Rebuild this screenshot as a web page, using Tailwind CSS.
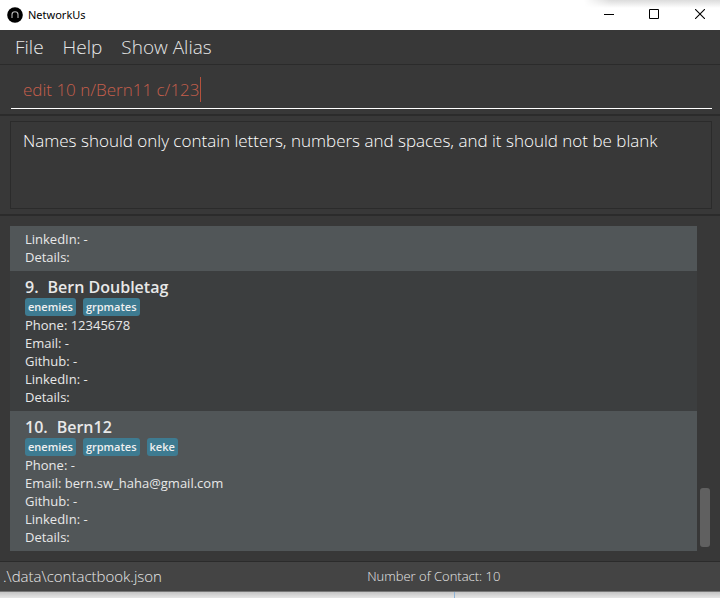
<!DOCTYPE html>
<html lang="en">
<head>
<meta charset="utf-8">
<title>NetworkUs</title>
<script src="https://cdn.jsdelivr.net/npm/@tailwindcss/browser@4"></script>
</head>
<body class="flex h-screen flex-col overflow-hidden bg-[#383838] font-['Open_Sans',sans-serif] text-[#e8e8e8]">
  <header class="relative flex h-[30px] shrink-0 items-center bg-white text-black">
    <div class="absolute top-0 right-0 h-2 w-[136px] bg-linear-to-b from-[#dcdcdc] to-white mask-l-from-80%"></div>
    <svg class="relative ml-[7px] size-4" viewBox="0 0 16 16" aria-hidden="true">
      <circle cx="8" cy="8" r="7.8" fill="#000"/>
      <path d="M5 11V7.5C5 3.900 11 3.900 11 7.500V11" fill="none" stroke="#bbb" stroke-width="1.1"/>
    </svg>
    <h1 class="ml-[5px] grow font-['Noto_Sans','Open_Sans',sans-serif] text-[11px]">NetworkUs</h1>
    <div class="relative -mt-0.5 flex">
      <button type="button" aria-label="Minimize" class="flex h-7 w-[46px] items-center justify-center">
        <svg class="size-[10px]" viewBox="0 0 10 10"><path d="M0 5.5H10" stroke="#000"/></svg>
      </button>
      <button type="button" aria-label="Maximize" class="flex h-7 w-[44px] items-center justify-center">
        <svg class="size-[10px]" viewBox="0 0 10 10"><path d="M.5 .5H9.500V9.500H.5Z" fill="none" stroke="#000"/></svg>
      </button>
      <button type="button" aria-label="Close" class="flex h-7 w-[44px] items-center justify-center pl-1">
        <svg class="size-[10px]" viewBox="0 0 10 10"><path d="M0 0L10 10M10 0L0 10" stroke="#000" stroke-width="1.1"/></svg>
      </button>
    </div>
  </header>

  <nav class="flex h-[35px] shrink-0 items-center gap-[19px] border-b border-[#2b2b2b] px-[15px] text-[19px] font-light">
    <button type="button">File</button>
    <button type="button">Help</button>
    <button type="button">Show Alias</button>
  </nav>

  <form class="shrink-0 border-b-2 border-[#2b2b2b] px-2 pt-1.5 pb-[5px]">
    <div class="ml-[3px] flex h-[38px] items-center border-b border-white pl-3">
      <input type="text" aria-label="Command" value="edit 10 n/Bern11 c/123" class="field-sizing-content bg-transparent text-[17px] font-[350] text-[#c65f4c] outline-none">
      <span class="h-[25px] w-px bg-[#b5513c]"></span>
    </div>
  </form>

  <section class="shrink-0 border-b-2 border-[#2b2b2b] px-2 pt-[5px] pb-[5px]">
    <output class="ml-0.5 block h-[88px] border border-[#2b2b2b] px-3 py-[7px] text-[17px] leading-6 font-[350] text-white">Names should only contain letters, numbers and spaces, and it should not be blank</output>
  </section>

  <main class="flex min-h-0 grow gap-[3px] px-[10px] py-[10px] text-[13px] leading-[18px]">
    <ol class="flex min-w-0 grow flex-col">
      <li class="bg-[#515658] px-[15px] pt-1 pb-[5px]">
        <p>LinkedIn: -</p>
        <p>Details:</p>
      </li>
      <li class="bg-[#3c3e3f] px-[15px] py-[5px]">
        <h2 class="flex gap-[9px] text-[16px] leading-[22px] font-semibold"><span>9.</span><span>Bern Doubletag</span></h2>
        <div class="flex gap-[7px] text-[11px] font-semibold text-[#f0f0f0]">
          <span class="rounded-[3px] bg-[#3e7b91] px-[3px]">enemies</span>
          <span class="rounded-[3px] bg-[#3e7b91] px-[3px]">grpmates</span>
        </div>
        <p>Phone: 12345678</p>
        <p>Email: -</p>
        <p>Github: -</p>
        <p>LinkedIn: -</p>
        <p>Details:</p>
      </li>
      <li class="bg-[#515658] px-[15px] py-[5px]">
        <h2 class="flex gap-[9px] text-[16px] leading-[22px] font-semibold"><span>10.</span><span>Bern12</span></h2>
        <div class="flex gap-[7px] text-[11px] font-semibold text-[#f0f0f0]">
          <span class="rounded-[3px] bg-[#3e7b91] px-[3px]">enemies</span>
          <span class="rounded-[3px] bg-[#3e7b91] px-[3px]">grpmates</span>
          <span class="rounded-[3px] bg-[#3e7b91] px-[3px]">keke</span>
        </div>
        <p>Phone: -</p>
        <p>Email: bern.sw_haha@gmail.com</p>
        <p>Github: -</p>
        <p>LinkedIn: -</p>
        <p>Details:</p>
      </li>
    </ol>
    <div class="flex w-[10px] shrink-0 flex-col justify-end pb-1">
      <div class="h-[59px] rounded-[3px] bg-[#606060]"></div>
    </div>
  </main>

  <footer class="shrink-0">
    <div class="grid h-[31px] grid-cols-[51%_1fr] items-center border-t border-b border-t-[#2b2b2b] border-b-[#777] bg-[#444] font-light">
      <span class="pl-[3px] text-[15px]">.\data\contactbook.json</span>
      <span class="pt-px text-[13px]">Number of Contact: 10</span>
    </div>
    <div class="flex h-1.5 bg-linear-to-b from-[#c4c4c4] to-[#e6e6e6]">
      <div class="ml-[63%] w-px bg-[#8db4d9]"></div>
    </div>
  </footer>
</body>
</html>
